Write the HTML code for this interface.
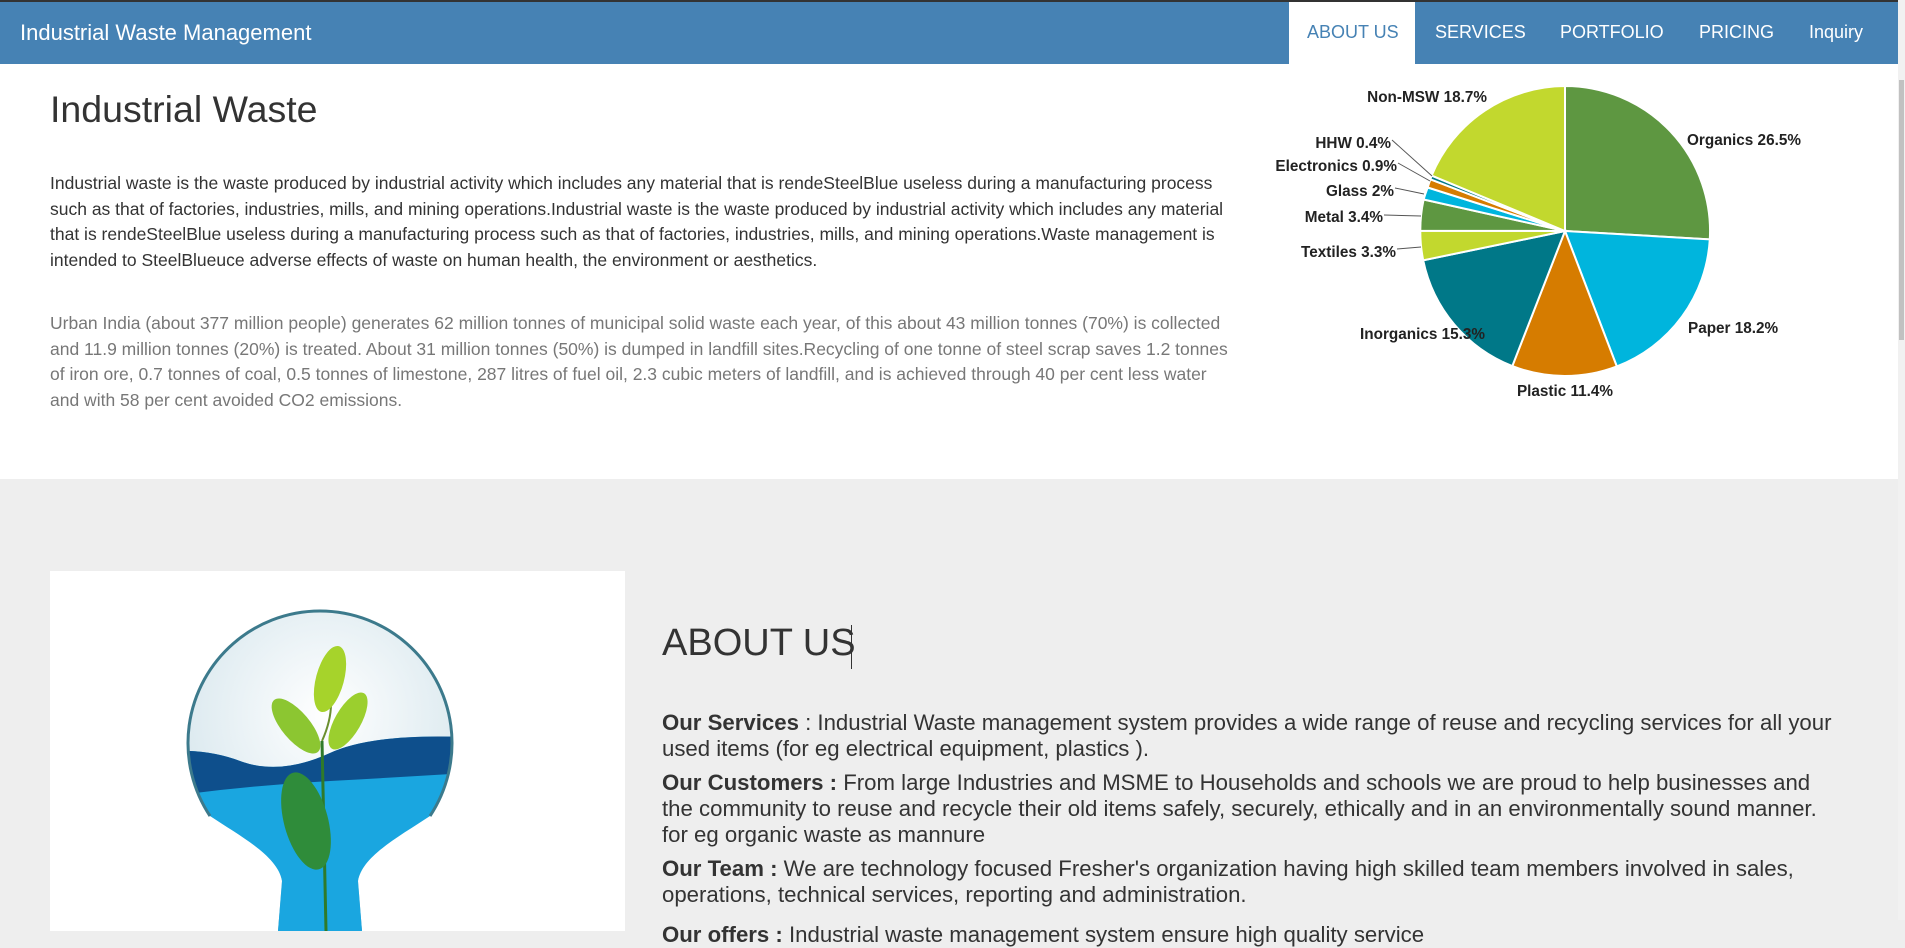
<!DOCTYPE html>
<html><head><meta charset="utf-8"><style>
*{box-sizing:border-box;margin:0;padding:0}
html,body{width:1905px;height:920px;overflow:hidden;background:#eee;font-family:"Liberation Sans",Arial,sans-serif}
.nav{position:absolute;left:0;top:0;width:1898px;height:64px;background:#4682b4;border-top:2px solid #333}
.brand{position:absolute;left:20px;top:18px;color:#fff;font-size:22px}
.ni{position:absolute;top:20px;color:#fff;font-size:18px}
.act{position:absolute;left:1289px;top:0;width:126px;height:62px;background:#fff}
.sb{position:absolute;left:1898px;top:0;width:7px;height:920px;background:#f1f1f1}
.sb div{position:absolute;left:1px;top:80px;width:5px;height:260px;background:#c1c1c1}
.top{position:absolute;left:0;top:64px;width:1898px;height:415px;background:#fff}
.h1{position:absolute;left:50px;top:88px;font-size:37.5px;color:#333}
.p{position:absolute;left:50px;font-size:17.5px;line-height:25.5px;color:#333;white-space:nowrap}
.g{color:#777}
.box{position:absolute;left:50px;top:571px;width:575px;height:360px;background:#fff}
.ab{position:absolute;left:662px;top:622px;font-size:38px;color:#333}
.cur{position:absolute;left:851px;top:625px;width:1px;height:44px;background:#333}
.t{position:absolute;left:662px;font-size:22.2px;line-height:26px;color:#333;white-space:nowrap}
.t b{font-weight:bold}
svg text{font-family:"Liberation Sans",Arial,sans-serif;font-size:15.3px;font-weight:bold;fill:#222}
</style></head><body>
<div class="nav">
<div class="brand">Industrial Waste Management</div>
<div class="act"></div>
<div class="ni" style="left:1307px;color:#4682b4">ABOUT US</div>
<div class="ni" style="left:1435px">SERVICES</div>
<div class="ni" style="left:1560px">PORTFOLIO</div>
<div class="ni" style="left:1699px">PRICING</div>
<div class="ni" style="left:1809px">Inquiry</div>
</div>
<div class="top"></div>
<div class="h1">Industrial Waste</div>
<div class="p" style="top:171px">Industrial waste is the waste produced by industrial activity which includes any material that is rendeSteelBlue useless during a manufacturing process<br>such as that of factories, industries, mills, and mining operations.Industrial waste is the waste produced by industrial activity which includes any material<br>that is rendeSteelBlue useless during a manufacturing process such as that of factories, industries, mills, and mining operations.Waste management is<br>intended to SteelBlueuce adverse effects of waste on human health, the environment or aesthetics.</div>
<div class="p g" style="top:311px">Urban India (about 377 million people) generates 62 million tonnes of municipal solid waste each year, of this about 43 million tonnes (70%) is collected<br>and 11.9 million tonnes (20%) is treated. About 31 million tonnes (50%) is dumped in landfill sites.Recycling of one tonne of steel scrap saves 1.2 tonnes<br>of iron ore, 0.7 tonnes of coal, 0.5 tonnes of limestone, 287 litres of fuel oil, 2.3 cubic meters of landfill, and is achieved through 40 per cent less water<br>and with 58 per cent avoided CO2 emissions.</div>

<svg style="position:absolute;left:0;top:0" width="1898" height="480">
<g stroke="#fff" stroke-width="2">
<path d="M1565 231 L1565 86 A145 145 0 0 1 1709.8 239.4 Z" fill="#5e9741"/>
<path d="M1565 231 L1709.8 239.4 A145 145 0 0 1 1616.8 366.4 Z" fill="#00b5dd"/>
<path d="M1565 231 L1616.8 366.4 A145 145 0 0 1 1512.3 366.1 Z" fill="#d67c00"/>
<path d="M1565 231 L1512.3 366.1 A145 145 0 0 1 1423.2 260.3 Z" fill="#007888"/>
<path d="M1565 231 L1423.2 260.3 A145 145 0 0 1 1420.3 230.7 Z" fill="#c2d82e"/>
<path d="M1565 231 L1420.3 230.7 A145 145 0 0 1 1423.6 199.5 Z" fill="#5e9741"/>
<path d="M1565 231 L1423.6 199.5 A145 145 0 0 1 1427.7 187.5 Z" fill="#00b5dd"/>
<path d="M1565 231 L1427.7 187.5 A145 145 0 0 1 1430.4 179.3 Z" fill="#d67c00"/>
<path d="M1565 231 L1430.4 179.3 A145 145 0 0 1 1431.6 175.6 Z" fill="#007888"/>
<path d="M1565 231 L1431.6 175.6 A145 145 0 0 1 1565 86 Z" fill="#c2d82e"/>
</g>
<g stroke="#555" stroke-width="1" fill="none">
<path d="M1392 140 L1432 176"/><path d="M1398 163 L1430 181"/><path d="M1395 188 L1424 194"/><path d="M1384 215 L1421 216"/><path d="M1397 249 L1421 247"/>
</g>
<text x="1487" y="102" text-anchor="end">Non-MSW 18.7%</text>
<text x="1687" y="145">Organics 26.5%</text>
<text x="1391" y="148" text-anchor="end">HHW 0.4%</text>
<text x="1397" y="171" text-anchor="end">Electronics 0.9%</text>
<text x="1394" y="196" text-anchor="end">Glass 2%</text>
<text x="1383" y="222" text-anchor="end">Metal 3.4%</text>
<text x="1396" y="257" text-anchor="end">Textiles 3.3%</text>
<text x="1485" y="339" text-anchor="end">Inorganics 15.3%</text>
<text x="1688" y="333">Paper 18.2%</text>
<text x="1565" y="396" text-anchor="middle">Plastic 11.4%</text>
</svg>

<div class="box">
<svg width="575" height="360">
<defs>
<clipPath id="b"><path d="M232 310 C228 285 190 265 160 245 A132 132 0 1 1 380 245 C350 265 312 285 308 310 L312 360 L228 360 Z"/></clipPath>
<radialGradient id="gl" cx="0.5" cy="0.4" r="0.6"><stop offset="0" stop-color="#fff"/><stop offset="0.7" stop-color="#dbe9ef"/><stop offset="1" stop-color="#6a98a8"/></radialGradient>
</defs>
<g clip-path="url(#b)">
<rect x="100" y="0" width="350" height="360" fill="url(#gl)"/>
<path d="M100 182 Q150 175 190 190 T280 182 T450 168 L450 360 L100 360Z" fill="#1aa6e0"/>
<path d="M100 182 Q150 175 190 190 T280 182 T450 168 L450 200 Q370 205 280 210 T100 228Z" fill="#0e4f8c"/>
<path d="M272 100 Q290 130 272 170" stroke="#6a8f2f" stroke-width="2" fill="none"/>
<path d="M272 170 L276 360" stroke="#2f7a2a" stroke-width="3"/>
<ellipse cx="280" cy="108" rx="14" ry="34" fill="#a6d32b" transform="rotate(15 280 108)"/>
<ellipse cx="246" cy="155" rx="14" ry="34" fill="#8cc631" transform="rotate(-40 246 155)"/>
<ellipse cx="298" cy="150" rx="13" ry="32" fill="#9bcf2e" transform="rotate(30 298 150)"/>
<ellipse cx="256" cy="250" rx="22" ry="50" fill="#2f8c3a" transform="rotate(-15 256 250)"/>
</g>
<path d="M160 245 A132 132 0 1 1 380 245" stroke="#3c7a8c" stroke-width="3" fill="none"/>
</svg>
</div>
<div class="ab">ABOUT US</div><div class="cur"></div>
<div class="t" style="top:710px"><b>Our Services</b> : Industrial Waste management system provides a wide range of reuse and recycling services for all your<br>used items (for eg electrical equipment, plastics ).</div>
<div class="t" style="top:770px"><b>Our Customers :</b> From large Industries and MSME to Households and schools we are proud to help businesses and<br>the community to reuse and recycle their old items safely, securely, ethically and in an environmentally sound manner.<br>for eg organic waste as mannure</div>
<div class="t" style="top:856px"><b>Our Team :</b> We are technology focused Fresher's organization having high skilled team members involved in sales,<br>operations, technical services, reporting and administration.</div>
<div class="t" style="top:922px"><b>Our offers :</b> Industrial waste management system ensure high quality service</div>
<div class="sb"><div></div></div>
</body></html>
